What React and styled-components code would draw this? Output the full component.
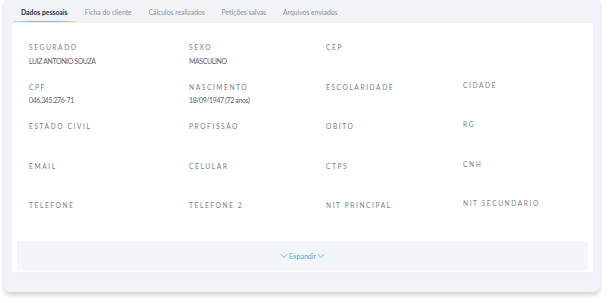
import React from 'react';
import styled, { createGlobalStyle } from 'styled-components';

const GlobalStyle = createGlobalStyle`
  html, body {
    margin: 0;
    padding: 0;
    background: #ffffff;
    font-family: 'Lato', 'Open Sans', sans-serif;
  }
`;

const tabs = ['Dados pessoais', 'Ficha do cliente', 'Cálculos realizados', 'Petições salvas', 'Arquivos enviados'];

const rows = [
  [
    { label: 'Segurado', value: 'LUIZ ANTONIO SOUZA' },
    { label: 'Sexo', value: 'MASCULINO' },
    { label: 'CEP' },
    null,
  ],
  [
    { label: 'CPF', value: '046.345.276-71' },
    { label: 'Nascimento', value: '18/09/1947 (72 anos)' },
    { label: 'Escolaridade' },
    { label: 'Cidade', raised: true },
  ],
  [
    { label: 'Estado civil' },
    { label: 'Profissão' },
    { label: 'Obito' },
    { label: 'RG', raised: true },
  ],
  [
    { label: 'Email' },
    { label: 'Celular' },
    { label: 'CTPS' },
    { label: 'CNH', raised: true },
  ],
  [
    { label: 'Telefone' },
    { label: 'Telefone 2' },
    { label: 'NIT principal' },
    { label: 'NIT secundario', raised: true },
  ],
];

const Chevron = () => (
  <svg width="8" height="6" viewBox="0 0 8 6" fill="none">
    <path d="M1 1.5 L4 4.5 L7 1.5" stroke="#6ab2dc" strokeWidth="0.9" strokeLinecap="round" strokeLinejoin="round" />
  </svg>
);

const App = () => {
  return (
    <>
      <GlobalStyle />
      <Page>
        <Panel>
          <TabBar>
            {tabs.map((t, i) => (
              <Tab key={t} active={i === 0}>{t}</Tab>
            ))}
          </TabBar>
          <Card>
            <Grid>
              {rows.map((row, r) =>
                row.map((f, c) => (
                  <Field key={`${r}-${c}`} raised={f && f.raised}>
                    {f && <Label>{f.label}</Label>}
                    {f && f.value && <Value>{f.value}</Value>}
                  </Field>
                ))
              )}
            </Grid>
            <ExpandBar>
              <ExpandLink>
                <Chevron />
                Expandir
                <Chevron />
              </ExpandLink>
            </ExpandBar>
          </Card>
        </Panel>
      </Page>
    </>
  );
};

export default App;

const Page = styled.div`
  width: 608px;
  height: 303px;
  padding: 0 8px 0 4px;
  box-sizing: border-box;
`;

const Panel = styled.div`
  width: 596px;
  height: 292px;
  background: #f2f3f6;
  border-radius: 0 0 6px 6px;
  box-shadow: 0 3px 4px rgba(0, 0, 0, 0.18);
  padding: 0 7px 0 8px;
  box-sizing: border-box;
  display: flex;
  flex-direction: column;
`;

const TabBar = styled.div`
  height: 23px;
  display: flex;
  align-items: stretch;
`;

const Tab = styled.div`
  position: relative;
  padding: 0 8.4px;
  display: flex;
  align-items: center;
  font-size: 6.8px;
  color: ${(p) => (p.active ? '#2a2f36' : '#8c9099')};
  font-weight: ${(p) => (p.active ? 700 : 400)};
  white-space: nowrap;
  &:first-child {
    padding-left: 9px;
    padding-right: 9px;
  }
  &::after {
    content: '';
    display: ${(p) => (p.active ? 'block' : 'none')};
    position: absolute;
    left: 1px;
    right: 0;
    bottom: 1px;
    height: 1.5px;
    border-radius: 1px;
    background: linear-gradient(90deg, rgba(240, 150, 90, 0.4), #f0a067 30%, #f0a067 70%, rgba(240, 150, 90, 0.4));
  }
`;

const Card = styled.div`
  width: 581px;
  height: 249px;
  background: #ffffff;
  border-radius: 2px;
  box-shadow: 0 0 1px rgba(0, 0, 0, 0.08);
  padding: 0 5px 2px 5px;
  box-sizing: border-box;
  display: flex;
  flex-direction: column;
`;

const Grid = styled.div`
  flex: 1;
  display: grid;
  grid-template-columns: 160px 137px 137px 1fr;
  grid-auto-rows: 39.5px;
  padding: 20px 0 0 12px;
`;

const Field = styled.div`
  display: flex;
  flex-direction: column;
  gap: 5px;
  margin-top: ${(p) => (p.raised ? '-2px' : '0')};
`;

const Label = styled.div`
  font-size: 6.6px;
  letter-spacing: 1.6px;
  text-transform: uppercase;
  color: #7a7e85;
  line-height: 8px;
`;

const Value = styled.div`
  font-size: 6.9px;
  color: #5a5e65;
  line-height: 8px;
  letter-spacing: -0.35px;
  margin-top: 0.5px;
`;

const ExpandBar = styled.div`
  height: 29px;
  background: #f3f6f9;
  display: flex;
  align-items: center;
  justify-content: center;
`;

const ExpandLink = styled.div`
  display: flex;
  align-items: center;
  gap: 1px;
  font-size: 7px;
  color: #5aa8d8;
  margin-top: 1px;
`;
